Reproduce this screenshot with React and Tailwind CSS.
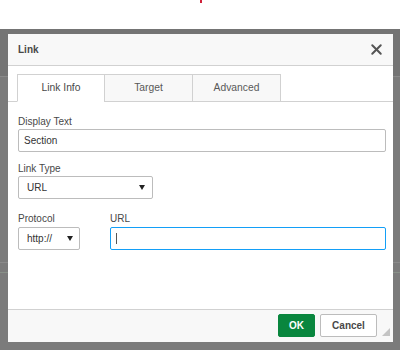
import { X } from 'lucide-react'

function Arrow() {
  return (
    <svg width="6" height="5" viewBox="0 0 6 5" aria-hidden="true">
      <path d="M0 0h6L3 5z" fill="#222" />
    </svg>
  )
}

function Tab({ label, active, first }) {
  return (
    <div
      className={
        'flex h-[28px] -mb-px items-center justify-center border border-[#d1d1d1] text-[10.3px] ' +
        (first ? 'w-[88px] ' : '-ml-px w-[89px] ') +
        (active ? 'bg-white border-b-white text-[#484848]' : 'bg-[#f8f8f8] text-[#595959]')
      }
    >
      {label}
    </div>
  )
}

function Label({ children, className = '' }) {
  return <div className={'h-[12px] text-[10px] leading-[12px] text-[#484848] ' + className}>{children}</div>
}

export default function App() {
  return (
    <div className="flex h-[350px] w-[400px] flex-col overflow-hidden bg-white font-['Liberation_Sans',Arial,sans-serif]">
      <div className="h-[29px] shrink-0 pl-[200px]">
        <div className="h-[3px] w-[2px] bg-[#d0213a]" />
      </div>

      {/* dimmed page behind the dialog */}
      <div className="flex-1 bg-[#7b7b7b] bg-[linear-gradient(to_bottom,#747474_0,#747474_47px,#8a8a8a_47px,#8a8a8a_48px,#7b7b7b_48px,#7b7b7b_233px,#8a8a8a_233px,#8a8a8a_234px,#7b7b7b_234px,#7b7b7b_243px,#889088_243px,#889088_244px,#7b7b7b_244px)] pl-[8px] pt-[5px]">
        <div className="flex h-[308px] w-[385px] flex-col bg-white">
          {/* title bar */}
          <div className="flex h-[32px] shrink-0 items-center justify-between border-b border-[#d1d1d1] bg-[#f8f8f8] pl-[10px] pr-[8px]">
            <span className="text-[10px] font-bold text-[#484848]">Link</span>
            <X size={17} strokeWidth={2.8} className="text-[#555]" aria-hidden="true" />
          </div>

          {/* tabs */}
          <div className="mt-[8px] flex h-[28px] shrink-0 items-end border-b border-[#d1d1d1] pl-[9px]">
            <Tab label="Link Info" active first />
            <Tab label="Target" />
            <Tab label="Advanced" />
          </div>

          {/* fields */}
          <div className="flex flex-1 flex-col pl-[10px] pr-[7px]">
            <Label className="mt-[14px]">Display Text</Label>
            <div className="mt-[1px] flex h-[23px] items-center rounded-[2px] border border-[#bcbcbc] pl-[5px] text-[10px] text-[#333]">
              Section
            </div>

            <Label className="mt-[11px]">Link Type</Label>
            <div className="mt-[1px] flex h-[23px] w-[135px] items-center justify-between rounded-[2px] border border-[#bcbcbc] bg-white pl-[8px] pr-[7px] text-[10px] text-[#333]">
              <span>URL</span>
              <Arrow />
            </div>

            <div className="mt-[14px] flex">
              <div className="w-[92px] shrink-0">
                <Label>Protocol</Label>
                <div className="mt-[2px] flex h-[23px] w-[62px] items-center justify-between rounded-[2px] border border-[#bcbcbc] bg-white pl-[8px] pr-[6px] text-[10px] text-[#333]">
                  <span>http://</span>
                  <Arrow />
                </div>
              </div>
              <div className="flex-1">
                <Label>URL</Label>
                <div className="mt-[2px] flex h-[23px] items-center rounded-[2px] border border-[#139ff7] pl-[5px]">
                  <div className="h-[11px] w-px bg-[#555]" />
                </div>
              </div>
            </div>
          </div>

          {/* footer */}
          <div className="relative flex h-[33px] shrink-0 items-start justify-end gap-[5px] border-t border-[#d1d1d1] bg-[#f8f8f8] pr-[16px] pt-[4px]">
            <button
              type="button"
              className="flex h-[23px] w-[37px] items-center justify-center rounded-[2px] border border-[#09863e] bg-[#09863e] text-[10px] font-bold text-white"
            >
              OK
            </button>
            <button
              type="button"
              className="flex h-[23px] w-[57px] items-center justify-center rounded-[2px] border border-[#bcbcbc] bg-white text-[10px] font-bold text-[#484848]"
            >
              Cancel
            </button>
            <svg width="8" height="8" viewBox="0 0 8 8" className="absolute bottom-[6px] right-[3px]" aria-hidden="true">
              <path d="M8 0V8H0z" fill="#c4c4c4" />
            </svg>
          </div>
        </div>
      </div>
    </div>
  )
}
